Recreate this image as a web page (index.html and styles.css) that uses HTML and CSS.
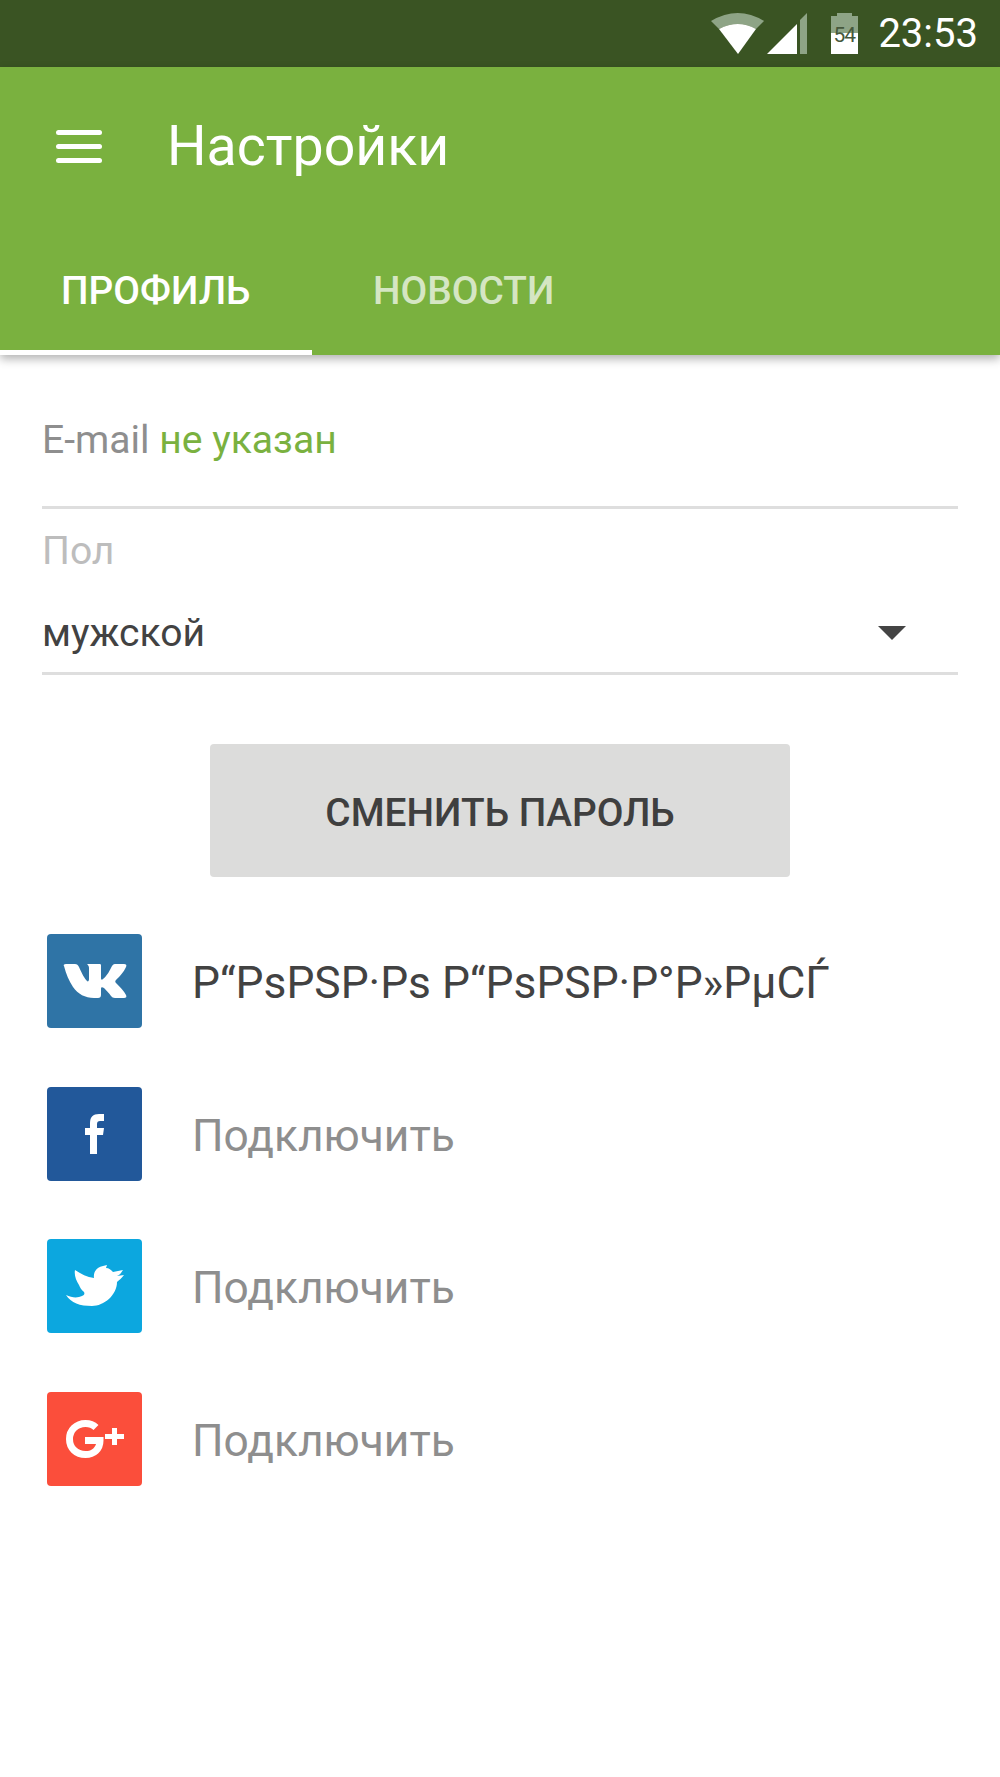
FILE: index.html
```html
<!DOCTYPE html>
<html lang="ru">
<head>
<meta charset="utf-8">
<title>Настройки</title>
<link rel="stylesheet" href="styles.css">
</head>
<body>
<div id="phone">
    <div class="status">
        <svg class="ic-wifi" width="53" height="41" viewBox="0 0 53 41">
            <path fill="#8ea486" d="M0 8 Q27 -8 53 8 L45 16 Q27 6 8 16 Z"/>
            <path fill="#fff" d="M8 16 Q27 6 45 16 L27 41 Z"/>
        </svg>
        <svg class="ic-signal" width="40" height="41" viewBox="0 0 40 41">
            <path fill="#fff" d="M0 41 L30 11 V41 Z"/>
            <path fill="#8ea486" d="M33 7 L40 0 V41 H33 Z"/>
        </svg>
        <div class="battery">
            <svg width="27" height="41" viewBox="0 0 27 41">
                <path fill="#8ea486" d="M6 0 H21 V3 H27 V20 H0 V3 H6 Z"/>
                <path fill="#fff" d="M0 20 H27 V41 H0 Z"/>
            </svg>
            <span class="battery-num">54</span>
        </div>
        <span class="clock">23:53</span>
    </div>

    <div class="appbar">
        <div class="toolbar">
            <div class="burger"><i></i><i></i><i></i></div>
            <h1>Настройки</h1>
        </div>
        <div class="tabs">
            <div class="tab active">ПРОФИЛЬ</div>
            <div class="tab">НОВОСТИ</div>
        </div>
    </div>

    <div class="form">
        <div class="field-email">
            <span class="lbl">E-mail</span> <span class="green">не указан</span>
        </div>
        <div class="field-sex">
            <div class="hint">Пол</div>
            <div class="select">
                <span>мужской</span>
                <svg width="28" height="14" viewBox="0 0 28 14"><path fill="#444" d="M0 0 H28 L14 14 Z"/></svg>
            </div>
        </div>
        <button class="btn">СМЕНИТЬ ПАРОЛЬ</button>
    </div>

    <div class="socials">
        <div class="soc">
            <div class="soc-ic vk">
                <svg width="64" height="34" viewBox="0 0 64 34">
                    <path fill="#fff" d="M1 2 C0 1 1 0 3 0 H12 C14 0 15 1 16 3 C19 10 22 15 24 17 C25 18 26 17 26 15 V4 C26 2 25 1 24 0 H37 C38 0 38 1 38 2 V14 C38 16 39 16 40 15 C44 12 47 6 49 2 C50 1 50 0 52 0 H61 C63 0 64 1 63 3 C61 8 56 13 53 16 C52 17 52 18 53 19 C57 23 61 27 63 31 C64 33 63 34 61 34 H52 C50 34 49 33 48 32 C46 29 43 26 41 24 C39 23 38 23 38 25 V31 C38 33 37 34 35 34 H31 C22 34 15 30 10 23 C6 17 3 10 1 2 Z"/>
                </svg>
            </div>
            <span class="soc-name">Р“РѕРЅР·Рѕ Р“РѕРЅР·Р°Р»РµСЃ</span>
        </div>
        <div class="soc">
            <div class="soc-ic fb">
                <svg width="19" height="40" viewBox="0 0 19 40">
                    <path fill="#fff" d="M5 40 V21 H0 V14 H5 V9 C5 3 8 0 14 0 H19 V7 H15 C13 7 12 8 12 10 V14 H19 L18 21 H12 V40 Z"/>
                </svg>
            </div>
            <span class="soc-name off">Подключить</span>
        </div>
        <div class="soc">
            <div class="soc-ic tw">
                <svg width="58" height="42" viewBox="0 0 58 42">
                    <path fill="#fff" d="M0 30 C6 33 12 33 16 31 C18 30 19 29 18 27 C15 25 14 22 13 20 C10 15 8 10 9 5 C15 9 21 12 28 13 C27 7 31 2 37 1 L41 0 L40 3 C43 3 45 5 47 7 L57 5 C55 8 54 10 51 11 L58 10 C56 13 53 15 51 17 C51 30 38 41 26 41 C14 41 5 38 0 30 Z"/>
                </svg>
            </div>
            <span class="soc-name off">Подключить</span>
        </div>
        <div class="soc">
            <div class="soc-ic gp">
                <svg width="58" height="38" viewBox="0 0 58 38">
                    <path fill="none" stroke="#fff" stroke-width="7" d="M30 7.500 C27 4.500 23.500 3.500 19.500 3.500 C10 3.500 3.500 10.500 3.500 19 C3.500 28 10 34.500 19.500 34.500 C28 34.500 34 29 34 20.500 H19"/>
                    <path fill="#fff" d="M46 8 H51 V14 H58 V19 H51 V25 H46 V19 H39 V14 H46 Z"/>
                </svg>
            </div>
            <span class="soc-name off">Подключить</span>
        </div>
    </div>
</div>
</body>
</html>
```

FILE: styles.css
```css
body {
    margin: 0;
    background: #fff;
    font-family: Roboto, "Liberation Sans", sans-serif;
}

#phone {
    width: 1000px;
    height: 1777px;
    overflow: hidden;
}

.status {
    height: 67px;
    background: #3a5423;
    display: flex;
    align-items: center;
    justify-content: flex-end;
    padding-right: 22px;
    box-sizing: border-box;
}

.ic-wifi {
    margin-right: 3px;
}

.ic-signal {
    margin-right: 24px;
}

.battery {
    position: relative;
    width: 27px;
    height: 41px;
    margin-right: 20px;
}

.battery svg {
    display: block;
}

.battery-num {
    position: absolute;
    left: 2px;
    top: 11px;
    font-size: 21px;
    line-height: 22px;
    letter-spacing: -1px;
    color: #46583c;
}

.clock {
    color: #fff;
    font-size: 40px;
    line-height: 44px;
}

.appbar {
    background: #7ab13f;
    box-shadow: 0 4px 9px rgba(0, 0, 0, .3);
    position: relative;
}

.toolbar {
    height: 145px;
    display: flex;
    align-items: center;
    padding: 14px 0 0 56px;
    box-sizing: border-box;
}

.burger {
    width: 46px;
    display: flex;
    flex-direction: column;
    gap: 9px;
    margin-right: 65px;
}

.burger i {
    display: block;
    height: 5px;
    border-radius: 3px;
    background: #fff;
}

.toolbar h1 {
    margin: 0;
    color: #fff;
    font-size: 55.500px;
    font-weight: 400;
    line-height: 66px;
}

.tabs {
    height: 143px;
    display: flex;
}

.tab {
    width: 312px;
    height: 143px;
    box-sizing: border-box;
    padding: 57px 0 0 61px;
    font-size: 38.800px;
    line-height: 44px;
    font-weight: 500;
    color: rgba(255, 255, 255, .7);
}

.tab.active {
    color: #fff;
    border-bottom: 5px solid #fff;
}

.form {
    padding: 0 42px;
}

.field-email {
    height: 154px;
    box-sizing: border-box;
    padding-top: 63px;
    font-size: 39.100px;
    line-height: 44px;
    border-bottom: 3px solid #dedede;
}

.lbl {
    color: #8e8e8e;
}

.green {
    color: #7ab13f;
}

.field-sex {
    border-bottom: 3px solid #dedede;
    height: 166px;
    box-sizing: border-box;
}

.hint {
    padding-top: 20px;
    font-size: 39.100px;
    line-height: 44px;
    color: #bdbdbd;
}

.select {
    display: flex;
    justify-content: space-between;
    align-items: center;
    margin-top: 38px;
    font-size: 39.100px;
    line-height: 44px;
    color: #424242;
    padding-right: 52px;
}

.btn {
    display: block;
    width: 580px;
    height: 133px;
    margin: 69px auto 0;
    padding: 3px 0 0;
    border: 0;
    border-radius: 4px;
    background: #dcdcdb;
    color: #3f3f3f;
    font-family: inherit;
    font-size: 38.800px;
    font-weight: 500;
}

.socials {
    padding: 57px 0 0 47px;
    display: flex;
    flex-direction: column;
    gap: 58.700px;
}

.soc {
    display: flex;
    align-items: center;
    gap: 50px;
}

.soc-ic {
    width: 95px;
    height: 94px;
    border-radius: 4px;
    display: flex;
    align-items: center;
    justify-content: center;
}

.vk { background: #2f74a6; }
.fb { background: #22589a; }
.tw { background: #0ca7df; }
.gp { background: #fb4e3b; }

.soc-name {
    padding-top: 4px;
    font-size: 44.300px;
    line-height: 50px;
    color: #424242;
}

.soc-name.off {
    color: #8e8e8e;
}
```
